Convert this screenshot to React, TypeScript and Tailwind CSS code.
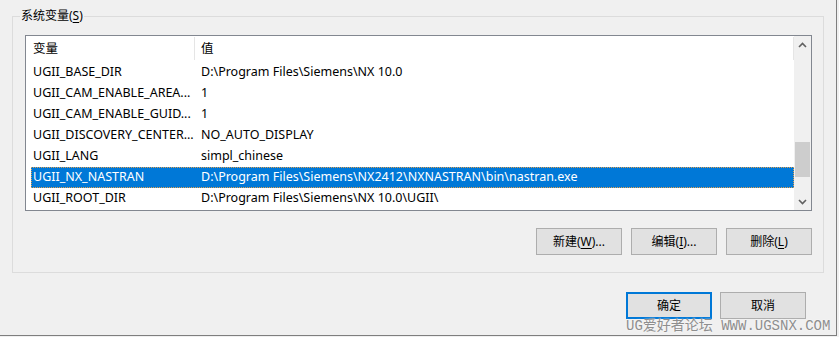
const font = "font-['Noto_Sans','Noto_Sans_CJK_SC',sans-serif]";

const rows = [
  { name: "UGII_BASE_DIR", value: "D:\\Program Files\\Siemens\\NX 10.0" },
  { name: "UGII_CAM_ENABLE_AREA...", value: "1" },
  { name: "UGII_CAM_ENABLE_GUID...", value: "1" },
  { name: "UGII_DISCOVERY_CENTER...", value: "NO_AUTO_DISPLAY" },
  { name: "UGII_LANG", value: "simpl_chinese" },
  { name: "UGII_NX_NASTRAN", value: "D:\\Program Files\\Siemens\\NX2412\\NXNASTRAN\\bin\\nastran.exe", selected: true },
  { name: "UGII_ROOT_DIR", value: "D:\\Program Files\\Siemens\\NX 10.0\\UGII\\" },
];

function Chevron({ down }: { down?: boolean }) {
  return (
    <svg width="9" height="6" viewBox="0 0 9 6">
      <polyline
        points={down ? "1,1 4.5,4.5 8,1" : "1,5 4.5,1.5 8,5"}
        fill="none"
        stroke="#606060"
        strokeWidth="1.6"
      />
    </svg>
  );
}

function Btn({ children, primary }: { children: React.ReactNode; primary?: boolean }) {
  return (
    <button
      className={
        "w-[86px] h-[27px] bg-[#e1e1e1] text-[12px] text-black flex items-center justify-center " +
        (primary ? "border-2 border-[#0078d7]" : "border border-[#adadad]")
      }
    >
      {children}
    </button>
  );
}

export default function App() {
  return (
    <div className={`w-[839px] h-[337px] bg-[#f0f0f0] relative overflow-hidden text-black ${font}`}>
      <div className="w-[837px] h-[336px] border-r border-b border-[#7e7e7e] flex flex-col">
        {/* System variables group */}
        <div className="ml-[12px] mt-[16px] w-[812px] h-[257px] border border-[#dcdcdc] relative flex flex-col">
          <span className="absolute left-[7px] -top-[9px] px-[1px] bg-[#f0f0f0] text-[12px] leading-[16px]">
            系统变量(<span className="underline underline-offset-2">S</span>)
          </span>

          <div className="ml-[12px] mt-[18px] w-[787px] h-[176px] border border-[#828790] bg-white flex">
            <div className="flex-1 flex flex-col text-[12.5px]">
              <div className="h-[26px] flex items-stretch shrink-0">
                <div className="w-[168px] pl-[7px] flex items-center">变量</div>
                <div className="w-px bg-[#e5e5e5] mt-px mb-[2px]" />
                <div className="flex-1 pl-[6px] flex items-center">值</div>
                <div className="w-px bg-[#e5e5e5] mt-px mb-[2px]" />
              </div>
              {rows.map((r) => (
                <div
                  key={r.name}
                  className={
                    "ml-[5px] h-[21px] shrink-0 flex items-center whitespace-nowrap " +
                    (r.selected
                      ? "bg-[#0078d7] text-white outline-1 outline-dotted outline-[#e0a050] -outline-offset-1"
                      : "")
                  }
                >
                  <div className="w-[170px] pl-[2px]">{r.name}</div>
                  <div className="flex-1">{r.value}</div>
                </div>
              ))}
            </div>

            {/* Scrollbar */}
            <div className="w-[17px] bg-[#f0f0f0] flex flex-col">
              <div className="h-[17px] flex items-center justify-center">
                <Chevron />
              </div>
              <div className="mt-[89px] mx-px h-[35px] bg-[#cdcdcd]" />
              <div className="flex-1" />
              <div className="h-[17px] flex items-center justify-center">
                <Chevron down />
              </div>
            </div>
          </div>

          <div className="mt-[17px] mr-[11px] flex justify-end gap-[9px]">
            <Btn>
              新建(<span className="underline underline-offset-2">W</span>)...
            </Btn>
            <Btn>
              编辑(<span className="underline underline-offset-2">I</span>)...
            </Btn>
            <Btn>
              删除(<span className="underline underline-offset-2">L</span>)
            </Btn>
          </div>
        </div>

        <div className="mt-[19px] mr-[30px] flex justify-end gap-[8px]">
          <Btn primary>确定</Btn>
          <Btn>取消</Btn>
        </div>
      </div>

      {/* Watermark */}
      <div className="absolute left-[626px] top-[317px] pointer-events-none text-[14px] leading-[18px] text-[#8e8e8e] whitespace-nowrap font-['Liberation_Mono','Noto_Sans_CJK_SC',monospace] [text-shadow:0_0_2px_#ffffff]">
        UG爱好者论坛 WWW.UGSNX.COM
      </div>
    </div>
  );
}
